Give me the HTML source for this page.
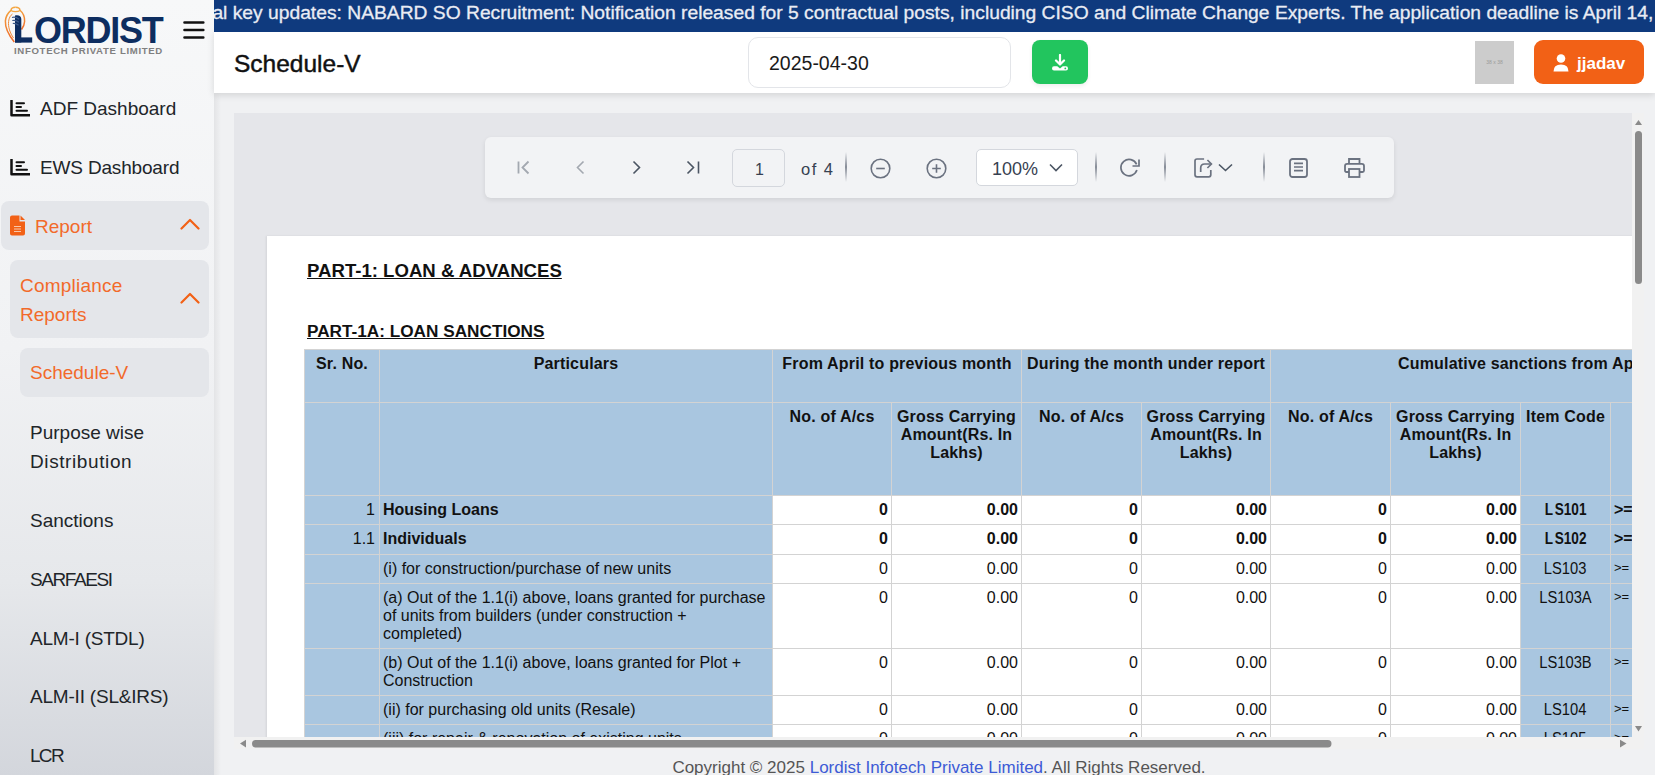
<!DOCTYPE html>
<html><head><meta charset="utf-8">
<style>
*{box-sizing:border-box;}
html,body{margin:0;padding:0;width:1655px;height:775px;overflow:hidden;background:#f0f1f3;font-family:"Liberation Sans",sans-serif;}
.abs{position:absolute;}
#sidebar{position:absolute;left:0;top:0;width:214px;height:775px;background:linear-gradient(180deg,#f7f8f9 0%,#f1f2f4 45%,#e6e8eb 75%,#d3d6dc 100%);}
#sidebar .item{position:absolute;font-size:19px;color:#212529;white-space:nowrap;}
#marquee{position:absolute;left:214px;top:0;width:1441px;height:32px;z-index:2;background:#0f3a7e;overflow:hidden;}
#marquee span{position:absolute;left:-1.6px;top:2px;font-size:19.25px;color:#e9ecf4;white-space:nowrap;-webkit-text-stroke:0.3px #e9ecf4;}
#header{position:absolute;left:214px;top:31px;width:1441px;height:62px;background:#fff;box-shadow:0 2px 7px rgba(0,0,0,0.13);z-index:1;}
#viewer{position:absolute;left:234px;top:113px;width:1398px;height:624px;background:#e5e6ea;overflow:hidden;}
#toolbar{position:absolute;left:251px;top:24px;width:909px;height:61px;background:#f2f3f5;border-radius:6px;box-shadow:0 2px 5px rgba(0,0,0,0.09);}
#page{position:absolute;left:33px;top:123px;width:1500px;height:700px;background:#fff;box-shadow:-1px 0 2px rgba(0,0,0,0.08);}
table{border-collapse:collapse;table-layout:fixed;position:absolute;left:37px;top:113px;font-size:16px;line-height:18px;color:#111;width:1426px;}
td{border:1px solid #d3d3d3;padding:5px 3px 0 3px;vertical-align:top;overflow:hidden;white-space:nowrap;}
td.b{background:#a9c6e0;}
td.w{background:#fff;}
td.h{font-weight:bold;text-align:center;padding-top:4.5px;letter-spacing:0.18px;}
td.r{text-align:right;}
td.c{text-align:center;}
td.c span{display:inline-block;transform:scaleX(0.85);}
td.c i{font-style:normal;letter-spacing:2px;}
td.c span.n{transform:scaleX(0.92);}
td.ge{font-size:13px;padding-top:4px;}
td.bb{font-weight:bold;}
.sep{position:absolute;top:15px;width:2px;height:30px;background:linear-gradient(180deg,rgba(107,114,128,0) 0%,rgba(107,114,128,0.8) 50%,rgba(107,114,128,0) 100%);}
</style></head><body>

<div id="sidebar">
  <svg class="abs" style="left:0px;top:0px" width="40" height="48" viewBox="0 0 40 48">
    <defs><linearGradient id="og" x1="0" y1="0" x2="0" y2="1"><stop offset="0" stop-color="#f4a742"/><stop offset="1" stop-color="#ee6a2a"/></linearGradient></defs>
    <path d="M15.5 7.2C13 7.2 11.2 8.3 11 10.3C8.5 12.3 5.8 15.5 5.4 21C5 28 9.5 36 14.3 42" fill="none" stroke="url(#og)" stroke-width="1.5"/>
    <path d="M15.5 7.2C18 7.2 19.8 8.3 20 10.3C22.6 12.5 24.8 16.5 24.6 21.5C24.4 25 23 27.5 21.5 29.5" fill="none" stroke="url(#og)" stroke-width="1.5"/>
    <path d="M11 10.5C13 12 18 12 20 10.5" fill="none" stroke="#f4a742" stroke-width="1.1"/>
    <path d="M13.5 38C10 33 8 27 8.6 21.5C9 17.5 10.5 15.5 12.5 14" fill="none" stroke="#f08a3a" stroke-width="1"/>
    <path d="M15 15.5C18.5 14.5 21.3 16 21.3 19V42.6H15Z" fill="#0d2d60"/>
    <rect x="15" y="37.4" width="17.2" height="5.2" fill="#0d2d60"/>
    <path d="M12 17.5C14.5 16.8 17 17.5 19 19.2M12.3 20.5C14.5 20 17 20.6 18.8 22.3M12.8 23.5C14.8 23.2 16.8 23.8 18.6 25.3" fill="none" stroke="#3d5a8a" stroke-width="1.2"/>
  </svg>
  <div class="abs" style="left:34px;top:11px;font-size:36px;font-weight:bold;color:#0d2d60;letter-spacing:-1.25px;line-height:40px;">ORDIST</div>
  <div class="abs" style="left:14px;top:45px;font-size:9.6px;font-weight:bold;color:#808080;letter-spacing:0.67px;line-height:11px;">INFOTECH PRIVATE LIMITED</div>
  <svg class="abs" style="left:183px;top:20px" width="22" height="20" viewBox="0 0 22 20"><path d="M1.5 2.5H20.3M1.5 10H20.3M1.5 17.5H20.3" stroke="#111" stroke-width="2.6" stroke-linecap="round"/></svg>

  <svg class="abs" style="left:10px;top:100px" width="20" height="17" viewBox="0 0 20 17"><path d="M1.5 0.5V15.3H19.5" fill="none" stroke="#111" stroke-width="2.5" stroke-linecap="round" stroke-linejoin="round"/><path d="M6.5 3.2H14M6.5 7H11M6.5 10.8H17" stroke="#111" stroke-width="2" stroke-linecap="round"/></svg>
  <div class="item" style="left:40px;top:98px;">ADF Dashboard</div>
  <svg class="abs" style="left:10px;top:159px" width="20" height="17" viewBox="0 0 20 17"><path d="M1.5 0.5V15.3H19.5" fill="none" stroke="#111" stroke-width="2.5" stroke-linecap="round" stroke-linejoin="round"/><path d="M6.5 3.2H14M6.5 7H11M6.5 10.8H17" stroke="#111" stroke-width="2" stroke-linecap="round"/></svg>
  <div class="item" style="left:40px;top:157px;letter-spacing:-0.17px;">EWS Dashboard</div>

  <div class="abs" style="left:1px;top:201px;width:208px;height:49px;background:#e4e6ea;border-radius:8px;"></div>
  <svg class="abs" style="left:10px;top:215px" width="16" height="21" viewBox="0 0 16 21"><path d="M2 0.5H9.5V6.5H15V18.5Q15 20.5 13 20.5H2Q0 20.5 0 18.5V2.5Q0 0.5 2 0.5Z" fill="#f26116"/><path d="M10.5 0.5L15 5H10.5Z" fill="#f26116"/><path d="M4 11.5H11M4 14H11M4 16.5H11" stroke="#f9c7a9" stroke-width="1.2"/></svg>
  <div class="item" style="left:35px;top:216px;color:#f26a2a;">Report</div>
  <svg class="abs" style="left:180px;top:218px" width="20" height="12" viewBox="0 0 20 12"><path d="M1.5 10.5L10 2L18.5 10.5" fill="none" stroke="#f26116" stroke-width="2.2" stroke-linecap="round" stroke-linejoin="round"/></svg>

  <div class="abs" style="left:10px;top:260px;width:199px;height:78px;background:#e4e6ea;border-radius:8px;"></div>
  <div class="item" style="left:20px;top:271px;color:#f26a2a;line-height:29px;"><span style="letter-spacing:0.22px">Compliance</span><br>Reports</div>
  <svg class="abs" style="left:180px;top:292px" width="20" height="12" viewBox="0 0 20 12"><path d="M1.5 10.5L10 2L18.5 10.5" fill="none" stroke="#f26116" stroke-width="2.2" stroke-linecap="round" stroke-linejoin="round"/></svg>

  <div class="abs" style="left:20px;top:348px;width:189px;height:49px;background:#e4e6ea;border-radius:8px;"></div>
  <div class="item" style="left:30px;top:362px;color:#f26a2a;">Schedule-V</div>

  <div class="item" style="left:30px;top:418px;line-height:29px;">Purpose wise<br><span style="letter-spacing:0.6px">Distribution</span></div>
  <div class="item" style="left:30px;top:510px;">Sanctions</div>
  <div class="item" style="left:30px;top:569px;letter-spacing:-1.4px;">SARFAESI</div>
  <div class="item" style="left:30px;top:628px;letter-spacing:-0.22px;">ALM-I (STDL)</div>
  <div class="item" style="left:30px;top:686px;letter-spacing:-0.2px;">ALM-II (SL&amp;IRS)</div>
  <div class="item" style="left:30px;top:745px;letter-spacing:-1.7px;">LCR</div>
</div>

<div class="abs" style="left:214px;top:93px;width:7px;height:682px;background:linear-gradient(90deg,rgba(0,0,0,0.055),rgba(0,0,0,0));"></div>
<div id="marquee"><span>al key updates: NABARD SO Recruitment: Notification released for 5 contractual posts, including CISO and Climate Change Experts. The application deadline is April 14, 2025.</span></div>

<div id="header">
  <div class="abs" style="left:20px;top:19px;font-size:24.5px;color:#111;line-height:28px;-webkit-text-stroke:0.45px #111;">Schedule-V</div>
  <div class="abs" style="left:534px;top:6px;width:263px;height:51px;border:1px solid #e3e5e9;border-radius:10px;background:#fff;"></div>
  <div class="abs" style="left:555px;top:21px;font-size:19.5px;color:#1a1a1a;line-height:22px;">2025-04-30</div>
  <div class="abs" style="left:818px;top:9px;width:56px;height:44px;background:#22c55e;border-radius:8px;box-shadow:0 2px 4px rgba(0,0,0,0.07);"></div>
  <svg class="abs" style="left:837px;top:23px" width="18" height="17" viewBox="0 0 18 17"><path d="M9 1V10M5 6.5L9 10.5L13 6.5" fill="none" stroke="#fff" stroke-width="2.2" stroke-linecap="round" stroke-linejoin="round"/><path d="M3 12.3H6.3L9 14.6L11.7 12.3H15Q17 12.3 17 14.4Q17 16.5 15 16.5H3Q1 16.5 1 14.4Q1 12.3 3 12.3Z" fill="#fff"/><circle cx="14.3" cy="14.4" r="0.9" fill="#22c55e"/></svg>
  <div class="abs" style="left:1261px;top:10px;width:39px;height:43px;background:#cccccc;color:#999;font-size:5px;text-align:center;line-height:43px;">38 x 38</div>
  <div class="abs" style="left:1320px;top:9px;width:110px;height:44px;background:#f26116;border-radius:9px;"></div>
  <svg class="abs" style="left:1339px;top:23px" width="16" height="18" viewBox="0 0 16 18"><circle cx="8" cy="4.5" r="4.3" fill="#fff"/><path d="M0.5 17.5Q0.5 10.5 8 10.5Q15.5 10.5 15.5 17.5Z" fill="#fff"/></svg>
  <div class="abs" style="left:1363px;top:23px;font-size:17px;font-weight:bold;color:#fff;line-height:20px;">jjadav</div>
</div>

<div id="viewer">
  <div id="toolbar">
    <svg class="abs" style="left:31px;top:23px" width="14" height="15" viewBox="0 0 14 15"><path d="M2.5 1.5V13.5M12.5 1.5L6.5 7.5L12.5 13.5" fill="none" stroke="#a3a8b0" stroke-width="1.8"/></svg>
    <svg class="abs" style="left:90px;top:23px" width="12" height="15" viewBox="0 0 12 15"><path d="M8.5 1.5L2.5 7.5L8.5 13.5" fill="none" stroke="#a3a8b0" stroke-width="1.6"/></svg>
    <svg class="abs" style="left:146px;top:23px" width="12" height="15" viewBox="0 0 12 15"><path d="M2.5 1.5L8.5 7.5L2.5 13.5" fill="none" stroke="#4b5563" stroke-width="1.6"/></svg>
    <svg class="abs" style="left:201px;top:23px" width="15" height="15" viewBox="0 0 15 15"><path d="M1.5 1.5L7.5 7.5L1.5 13.5M12.5 1.5V13.5" fill="none" stroke="#4b5563" stroke-width="1.6"/></svg>
    <div class="abs" style="left:247px;top:12px;width:53px;height:38px;border:1px solid #d4d7dd;border-radius:5px;"></div>
    <div class="abs" style="left:248px;top:23px;width:53px;text-align:center;font-size:16px;line-height:20px;color:#374151;">1</div>
    <div class="abs" style="left:316px;top:22px;font-size:16.5px;line-height:20px;color:#374151;letter-spacing:1.5px;">of 4</div>
    <div class="sep" style="left:360px;"></div>
    <svg class="abs" style="left:385px;top:21px" width="21" height="21" viewBox="0 0 21 21"><circle cx="10.5" cy="10.5" r="9.3" fill="none" stroke="#6b7280" stroke-width="1.6"/><path d="M6.2 10.5H14.8" stroke="#6b7280" stroke-width="1.6"/></svg>
    <svg class="abs" style="left:441px;top:21px" width="21" height="21" viewBox="0 0 21 21"><circle cx="10.5" cy="10.5" r="9.3" fill="none" stroke="#6b7280" stroke-width="1.6"/><path d="M6.2 10.5H14.8M10.5 6.2V14.8" stroke="#6b7280" stroke-width="1.6"/></svg>
    <div class="abs" style="left:491px;top:12px;width:102px;height:37px;border:1px solid #d4d7dd;border-radius:5px;background:#fff;"></div>
    <div class="abs" style="left:507px;top:22px;font-size:18px;line-height:20px;color:#374151;">100%</div>
    <svg class="abs" style="left:564px;top:26px" width="14" height="9" viewBox="0 0 14 9"><path d="M1 1.5L7 7.5L13 1.5" fill="none" stroke="#4b5563" stroke-width="1.6"/></svg>
    <div class="sep" style="left:610px;"></div>
    <svg class="abs" style="left:630px;top:18px" width="30" height="25" viewBox="0 0 30 25"><path d="M21.6 9.3A8.2 8.2 0 1 0 21.9 15.1" fill="none" stroke="#6b7280" stroke-width="1.7"/><path d="M24 4.6V11H17.5" fill="none" stroke="#6b7280" stroke-width="1.7"/></svg>
    <div class="sep" style="left:679px;"></div>
    <svg class="abs" style="left:705px;top:18px" width="26" height="26" viewBox="0 0 26 26"><path d="M14.1 4H7Q5 4 5 6V19.8Q5 21.8 7 21.8H18.8Q20.8 21.8 20.8 19.8V15.1" fill="none" stroke="#6b7280" stroke-width="1.7"/><path d="M10.7 17.1V13Q10.7 9 14.7 9H21.2" fill="none" stroke="#6b7280" stroke-width="1.7"/><path d="M17.4 5L21.4 9L17.4 13" fill="none" stroke="#6b7280" stroke-width="1.7"/></svg>
    <svg class="abs" style="left:733px;top:26px" width="15" height="9" viewBox="0 0 15 9"><path d="M1 1.5L7.5 7.5L14 1.5" fill="none" stroke="#4b5563" stroke-width="1.6"/></svg>
    <div class="sep" style="left:778px;"></div>
    <svg class="abs" style="left:804px;top:21px" width="19" height="20" viewBox="0 0 19 20"><rect x="1" y="1" width="17" height="18" rx="2.5" fill="none" stroke="#6b7280" stroke-width="1.8"/><path d="M5 5.4H14M5 9H14M5 12.6H14" stroke="#6b7280" stroke-width="1.6"/></svg>
    <svg class="abs" style="left:859px;top:21px" width="21" height="20" viewBox="0 0 21 20"><path d="M5 5.5V1H15.5V5.5" fill="none" stroke="#6b7280" stroke-width="1.8"/><path d="M5 14H2.5Q1 14 1 12.5V8Q1 5.8 3.2 5.8H17.8Q20 5.8 20 8V12.5Q20 14 18.5 14H16" fill="none" stroke="#6b7280" stroke-width="1.8"/><rect x="5" y="11" width="10.5" height="8" fill="none" stroke="#6b7280" stroke-width="1.8"/></svg>
  </div>
  <div id="page">
    <div class="abs" style="left:40px;top:24px;font-size:18.6px;font-weight:bold;text-decoration:underline;color:#111;line-height:22px;">PART-1: LOAN &amp; ADVANCES</div>
    <div class="abs" style="left:40px;top:84px;font-size:17.2px;font-weight:bold;text-decoration:underline;color:#111;line-height:22px;">PART-1A: LOAN SANCTIONS</div>
    <table>
    <colgroup><col style="width:75px"><col style="width:393px"><col style="width:119px"><col style="width:130px"><col style="width:120px"><col style="width:129px"><col style="width:120px"><col style="width:130px"><col style="width:90px"><col style="width:120px"></colgroup>
    <tr style="height:53px"><td class="b h">Sr. No.</td><td class="b h">Particulars</td><td class="b h" colspan="2">From April to previous month</td><td class="b h" colspan="2">During the month under report</td><td class="b h" colspan="4" style="text-align:left;padding-left:127px">Cumulative sanctions from April to the end of month</td></tr>
    <tr style="height:93px"><td class="b h"></td><td class="b h"></td><td class="b h">No. of A/cs</td><td class="b h">Gross Carrying<br>Amount(Rs. In<br>Lakhs)</td><td class="b h">No. of A/cs</td><td class="b h">Gross Carrying<br>Amount(Rs. In<br>Lakhs)</td><td class="b h">No. of A/cs</td><td class="b h">Gross Carrying<br>Amount(Rs. In<br>Lakhs)</td><td class="b h" style="text-align:left;padding-left:5px">Item Code</td><td class="b h"></td></tr>
    <tr style="height:29px"><td class="b r" style="padding-right:4px">1</td><td class="b bb">Housing Loans</td><td class="w r bb">0</td><td class="w r bb">0.00</td><td class="w r bb">0</td><td class="w r bb">0.00</td><td class="w r bb">0</td><td class="w r bb">0.00</td><td class="b c bb"><span><i>L</i>S101</span></td><td class="b bb">&gt;=</td></tr>
    <tr style="height:30px"><td class="b r" style="padding-right:4px">1.1</td><td class="b bb">Individuals</td><td class="w r bb">0</td><td class="w r bb">0.00</td><td class="w r bb">0</td><td class="w r bb">0.00</td><td class="w r bb">0</td><td class="w r bb">0.00</td><td class="b c bb"><span><i>L</i>S102</span></td><td class="b bb">&gt;=</td></tr>
    <tr style="height:29px"><td class="b r"></td><td class="b">(i) for construction/purchase of new units</td><td class="w r">0</td><td class="w r">0.00</td><td class="w r">0</td><td class="w r">0.00</td><td class="w r">0</td><td class="w r">0.00</td><td class="b c"><span class="n">LS103</span></td><td class="b ge">&gt;=</td></tr>
    <tr style="height:65px"><td class="b r"></td><td class="b">(a) Out of the 1.1(i) above, loans granted for purchase<br>of units from builders (under construction +<br>completed)</td><td class="w r">0</td><td class="w r">0.00</td><td class="w r">0</td><td class="w r">0.00</td><td class="w r">0</td><td class="w r">0.00</td><td class="b c"><span class="n">LS103A</span></td><td class="b ge">&gt;=</td></tr>
    <tr style="height:47px"><td class="b r"></td><td class="b">(b) Out of the 1.1(i) above, loans granted for Plot +<br>Construction</td><td class="w r">0</td><td class="w r">0.00</td><td class="w r">0</td><td class="w r">0.00</td><td class="w r">0</td><td class="w r">0.00</td><td class="b c"><span class="n">LS103B</span></td><td class="b ge">&gt;=</td></tr>
    <tr style="height:29px"><td class="b r"></td><td class="b">(ii) for purchasing old units (Resale)</td><td class="w r">0</td><td class="w r">0.00</td><td class="w r">0</td><td class="w r">0.00</td><td class="w r">0</td><td class="w r">0.00</td><td class="b c"><span class="n">LS104</span></td><td class="b ge">&gt;=</td></tr>
    <tr style="height:29px"><td class="b r"></td><td class="b">(iii) for repair &amp; renovation of existing units</td><td class="w r">0</td><td class="w r">0.00</td><td class="w r">0</td><td class="w r">0.00</td><td class="w r">0</td><td class="w r">0.00</td><td class="b c"><span class="n">LS105</span></td><td class="b ge">&gt;=</td></tr>
    </table>
  </div>
</div>

<div class="abs" style="left:1632px;top:113px;width:12px;height:636px;background:#f1f1f1;"></div>
<div class="abs" style="left:234px;top:737px;width:1410px;height:12px;background:#f1f1f1;"></div>
<svg class="abs" style="left:1632px;top:113px" width="12" height="636" viewBox="0 0 12 636">
  <path d="M3 12H10L6.5 7Z" fill="#8a8a8a"/>
  <rect x="3" y="18" width="7" height="153" rx="3.5" fill="#8a8a8a"/>
  <path d="M3 613H10L6.5 618.5Z" fill="#8a8a8a"/>
</svg>
<svg class="abs" style="left:234px;top:737px" width="1398" height="12" viewBox="0 0 1398 12">
  <path d="M12 2.8V10.5L6 6.6Z" fill="#8a8a8a"/>
  <rect x="18" y="3" width="1079.5" height="7.4" rx="3.7" fill="#8a8a8a"/>
  <path d="M1386 2.8V10.5L1392.5 6.6Z" fill="#8a8a8a"/>
</svg>
<div class="abs" style="left:234px;top:758px;width:1410px;text-align:center;font-size:17px;color:#555;">Copyright © 2025 <span style="color:#3d5bd6">Lordist Infotech Private Limited</span>. All Rights Reserved.</div>

</body></html>
